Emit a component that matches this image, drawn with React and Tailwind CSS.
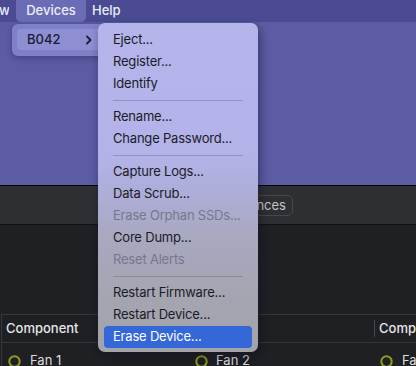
import React from "react";

const groups = [
  [
    { label: "Eject..." },
    { label: "Register..." },
    { label: "Identify" },
  ],
  [
    { label: "Rename..." },
    { label: "Change Password..." },
  ],
  [
    { label: "Capture Logs..." },
    { label: "Data Scrub..." },
    { label: "Erase Orphan SSDs...", disabled: true },
    { label: "Core Dump..." },
    { label: "Reset Alerts", disabled: true },
  ],
  [
    { label: "Restart Firmware..." },
    { label: "Restart Device..." },
    { label: "Erase Device...", active: true },
  ],
];

function StatusRing() {
  return (
    <svg width="13" height="13" viewBox="0 0 13 13" className="shrink-0">
      <circle cx="6.5" cy="6.5" r="5.2" fill="none" stroke="#8d9a1c" strokeWidth="2" />
    </svg>
  );
}

export default function App() {
  return (
    <div className="relative w-[416px] h-[366px] overflow-hidden flex flex-col font-['Inter',sans-serif] text-[13px]">
      {/* ── Menu bar ── */}
      <header className="h-[22px] shrink-0 bg-[#4a4b93] flex items-stretch text-[#ececf8] font-medium">
        <span className="flex items-center -ml-[1px] w-[10px] overflow-hidden">w</span>
        <span className="ml-[7px] w-[70px] flex items-center justify-center rounded-b-[5px] bg-[#6b6cb6]">
          Devices
        </span>
        <span className="ml-[6px] flex items-center">Help</span>
      </header>

      {/* ── Purple window area ── */}
      <div className="h-[163px] shrink-0 bg-[#5b5ca3]" />

      {/* ── Toolbar ── */}
      <div className="h-[40px] shrink-0 border-y border-t-black border-b-[#121316] bg-[#2e2f33] flex items-center justify-end">
        <button className="mr-[123px] h-[21px] px-[6px] rounded-[5px] border border-[#47484c] text-[#c4c4c8] text-[13px] leading-none">
          Preferences
        </button>
      </div>

      {/* ── Content ── */}
      <div className="flex-1 bg-[#1f2024] pt-[89px]">
        <div className="border-t border-l border-[#36373b] ml-[1px] text-[#e6e6e8] whitespace-nowrap">
          <div className="h-[28px] grid grid-cols-[187px_185px_1fr] items-center border-b border-[#36373b]">
            <span className="pl-[4px] font-medium">Component</span>
            <span />
            <span className="h-[17px] border-l border-[#4a4b4f] pl-[4px] flex items-center font-medium overflow-hidden">Component</span>
          </div>
          <div className="h-[36px] grid grid-cols-[187px_185px_1fr] items-center text-[#dcdcde]">
            <span className="flex items-center gap-[9px] pl-[6px]"><StatusRing />Fan 1</span>
            <span className="flex items-center gap-[8px] pl-[6px]"><StatusRing />Fan 2</span>
            <span className="flex items-center gap-[9px] pl-[6px] overflow-hidden">
              <StatusRing />
              Fan 3
            </span>
          </div>
        </div>
      </div>

      {/* ── Submenu: device list ── */}
      <div className="absolute left-[12px] top-[24px] w-[94px] h-[32px] rounded-[6px] bg-[#7f80c9] shadow-[0_2px_6px_rgba(20,20,60,0.35)] p-[5px] pr-[1px]">
        <div className="h-[21px] rounded-[4px] bg-[#8e8fd3] flex items-center justify-between pl-[10px] pr-[12px] text-[#1c1c34] font-medium">
          <span>B042</span>
          <svg width="8" height="10" viewBox="0 0 8 10">
            <path d="M2 1.5 L5.5 5 L2 8.5" fill="none" stroke="#1c1c34" strokeWidth="1.8" strokeLinecap="round" strokeLinejoin="round" />
          </svg>
        </div>
      </div>

      {/* ── Device actions menu ── */}
      <div className="absolute left-[98px] top-[23px] w-[160px] rounded-[7px] pt-[6px] pb-[4px] px-[6px] tracking-[-0.2px] shadow-[2px_4px_10px_rgba(10,10,30,0.45)] bg-[linear-gradient(to_bottom,#b5b5ec_0%,#b3b3e9_40%,#adadd8_52%,#a8a8c0_65%,#a5a5b2_82%,#a3a3aa_100%)]">
        {groups.map((group, gi) => (
          <div key={gi}>
            {gi > 0 && (
              <div className="h-[11px] flex items-center px-[9px]">
                <div className={`h-px w-full ${gi < 2 ? "bg-[#9090c6]" : gi < 3 ? "bg-[#9494bc]" : "bg-[#8c8c9c]"}`} />
              </div>
            )}
            {group.map((item) => (
              <div
                key={item.label}
                className={`h-[22px] flex items-center pl-[9px] rounded-[4px] whitespace-nowrap
                  ${item.active ? "bg-[#3468d8] text-white" : item.disabled ? "text-[#76778c]" : "text-[#1b1b26]"}`}
              >
                {item.label}
              </div>
            ))}
          </div>
        ))}
      </div>
    </div>
  );
}
